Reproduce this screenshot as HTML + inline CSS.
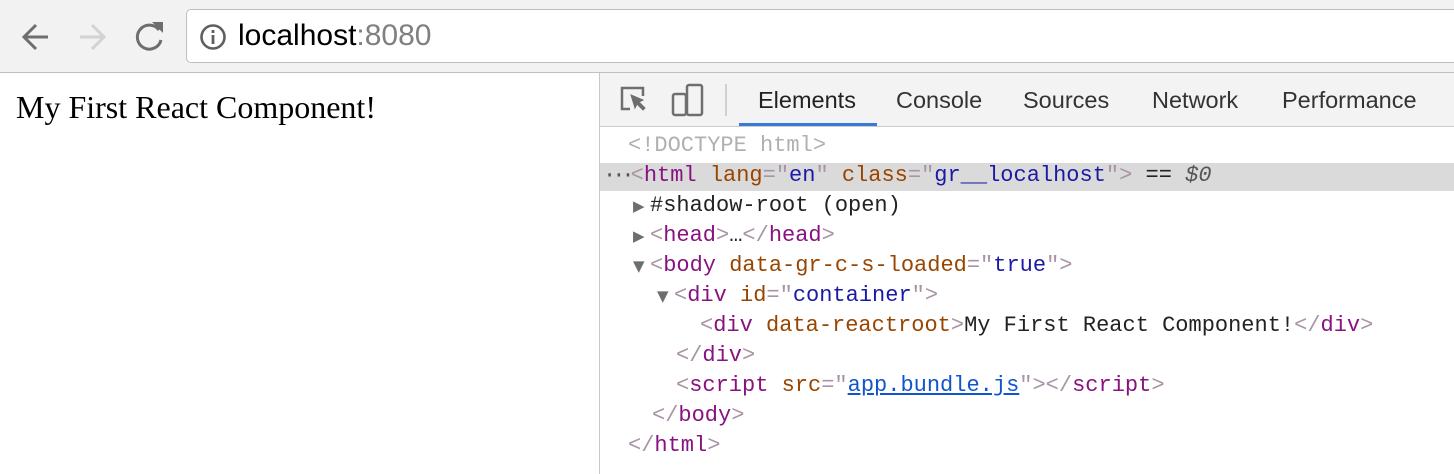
<!DOCTYPE html>
<html><head><style>
body{margin:0;width:1454px;height:474px;overflow:hidden;background:#fff;position:relative;font-family:"Liberation Sans",sans-serif}
.tb{position:absolute;left:0;top:0;width:1454px;height:72px;background:#f2f2f2;border-bottom:1px solid #c0c0c0}
.addr{position:absolute;left:186px;top:9px;width:1290px;height:52px;background:#fff;border:1px solid #bfbfbf;border-radius:5px}
.url{position:absolute;left:238px;top:19px;font-size:30px;color:#000;line-height:34px}
.url span{color:#808080}
.page{position:absolute;left:16px;top:89px;font-family:"Liberation Serif",serif;font-size:32px;color:#000}
.dt{position:absolute;left:599px;top:73px;right:0;bottom:0;border-left:1px solid #c8c8c8}
.tabs{position:absolute;left:0;top:0;right:0;height:53px;background:#f3f3f3;border-bottom:1px solid #cbcbcb}
.tab{position:absolute;top:13px;font-size:23.5px;color:#333;line-height:28px}
.ul{position:absolute;left:139px;top:50px;width:138px;height:3px;background:#3879d9}
.code{position:absolute;left:0;top:60px;right:0;font-family:"Liberation Mono",monospace;font-size:22px}
.l{position:absolute;height:30px;line-height:30px;white-space:pre;color:#222}
.hl{position:absolute;left:0;right:0;top:30px;height:28px;background:#dadada}
.t{color:#881280}.b{color:#a894a6}.a{color:#994500}.v{color:#1a1aa6}
.tri{display:inline-block;width:17px;color:#6e6e6e;font-family:"DejaVu Sans",sans-serif;font-size:15px;vertical-align:top}
</style></head><body>
<div class="tb">
<svg width="200" height="72" style="position:absolute;left:0;top:0">
<g fill="none" stroke-width="3">
<path d="M48 37H25M36 25L24 37l12 12" stroke="#6e6e6e"/>
<path d="M80 37h23M92 25l12 12-12 12" stroke="#d3d3d3"/>
<path d="M159 30A12 12 0 1 0 161 40" stroke="#6e6e6e"/>
</g>
<path d="M152 22h11v11z" fill="#6e6e6e"/>
</svg>
</div>
<div class="addr"></div>
<svg width="30" height="30" style="position:absolute;left:198px;top:22px"><circle cx="15" cy="15" r="11.5" fill="none" stroke="#5f5f5f" stroke-width="2.6"/><rect x="13.6" y="13" width="2.8" height="9" fill="#5f5f5f"/><rect x="13.6" y="8" width="2.8" height="3" fill="#5f5f5f"/></svg>
<div class="url">localhost<span>:8080</span></div>
<div class="page">My First React Component!</div>
<div class="dt">
<div class="tabs">
<svg width="130" height="53" style="position:absolute;left:0;top:0" fill="none" stroke="#6e6e6e" stroke-width="2.5">
<path d="M30 36h-8V15h21v8"/>
<path d="M31 22l12 5-4 2 6 6-2 2-6-6-2 4z" fill="#6e6e6e" stroke-width="1"/>
<rect x="87" y="12" width="15" height="30" rx="2"/>
<rect x="73" y="21" width="13" height="21" rx="2"/>
<path d="M126 11v32" stroke="#d0d0d0" stroke-width="2"/>
</svg>
<div class="tab" style="left:158px;color:#222">Elements</div>
<div class="tab" style="left:296px">Console</div>
<div class="tab" style="left:423px">Sources</div>
<div class="tab" style="left:552px">Network</div>
<div class="tab" style="left:682px">Performance</div>
<div class="ul"></div>
</div>
<div class="code">
<div class="hl"></div>
<div class="l" style="left:28px;top:-2px;color:#b0b0b0">&lt;!DOCTYPE html&gt;</div>
<div class="l" style="left:3px;top:28px"><span style="color:#555;letter-spacing:-4px">···</span><span class="b">&lt;</span><span class="t">html</span> <span class="a">lang</span><span class="b">="</span><span class="v">en</span><span class="b">"</span> <span class="a">class</span><span class="b">="</span><span class="v">gr__localhost</span><span class="b">"&gt;</span> == <i style="color:#555">$0</i></div>
<div class="l" style="left:33px;top:58px"><span class="tri">▶</span>#shadow-root (open)</div>
<div class="l" style="left:33px;top:88px"><span class="tri">▶</span><span class="b">&lt;</span><span class="t">head</span><span class="b">&gt;</span>…<span class="b">&lt;/</span><span class="t">head</span><span class="b">&gt;</span></div>
<div class="l" style="left:33px;top:118px"><span class="tri">▼</span><span class="b">&lt;</span><span class="t">body</span> <span class="a">data-gr-c-s-loaded</span><span class="b">="</span><span class="v">true</span><span class="b">"&gt;</span></div>
<div class="l" style="left:57px;top:148px"><span class="tri">▼</span><span class="b">&lt;</span><span class="t">div</span> <span class="a">id</span><span class="b">="</span><span class="v">container</span><span class="b">"&gt;</span></div>
<div class="l" style="left:100px;top:178px"><span class="b">&lt;</span><span class="t">div</span> <span class="a">data-reactroot</span><span class="b">&gt;</span>My First React Component!<span class="b">&lt;/</span><span class="t">div</span><span class="b">&gt;</span></div>
<div class="l" style="left:76px;top:208px"><span class="b">&lt;/</span><span class="t">div</span><span class="b">&gt;</span></div>
<div class="l" style="left:76px;top:238px"><span class="b">&lt;</span><span class="t">script</span> <span class="a">src</span><span class="b">="</span><span style="color:#1155cc;text-decoration:underline">app.bundle.js</span><span class="b">"&gt;&lt;/</span><span class="t">script</span><span class="b">&gt;</span></div>
<div class="l" style="left:52px;top:268px"><span class="b">&lt;/</span><span class="t">body</span><span class="b">&gt;</span></div>
<div class="l" style="left:28px;top:298px"><span class="b">&lt;/</span><span class="t">html</span><span class="b">&gt;</span></div>
</div>
</div>
</body></html>
